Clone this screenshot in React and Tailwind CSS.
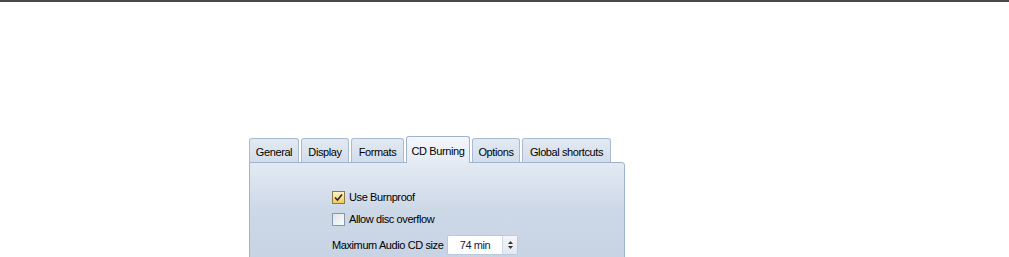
import React from "react";

const tabs = ["General", "Display", "Formats", "CD Burning", "Options", "Global shortcuts"];
const widths = [50, 48, 53, 64, 48, 89];

function Check({ checked }) {
  return (
    <div className={"w-[13px] h-[13px] border flex items-center justify-center " + (checked ? "border-[#8a7a4a] bg-gradient-to-b from-[#fff3c4] to-[#f4c956]" : "border-[#8596ad] bg-gradient-to-br from-[#dfe4ea] to-[#fbfcfd]")}>
      {checked && (
        <svg width="9" height="9" viewBox="0 0 9 9">
          <path d="M1 4.5 L3.5 7 L8 1.5" fill="none" stroke="#2a2a2a" strokeWidth="1.6" />
        </svg>
      )}
    </div>
  );
}

export default function App() {
  return (
    <div className="w-[1009px] h-[257px] bg-white overflow-hidden border-t-2 border-[#4a4a4a] tracking-[-0.4px]" style={{ fontFamily: '"Liberation Sans", Arial, sans-serif' }}>
      <div className="pl-[249px] pt-[133px]">
        <div className="w-[376px]">
          <div className="flex items-end gap-[2px] h-[27px]">
            {tabs.map((t, i) => {
              const sel = i === 3;
              return (
                <div
                  key={t}
                  style={{ width: widths[i] }}
                  className={
                    "flex items-center justify-center whitespace-nowrap text-[11px] text-black border border-b-0 rounded-t-[3px] " +
                    (sel
                      ? "h-[27px] border-[#9fb3cc] bg-gradient-to-b from-[#f4f7fb] to-[#e4ebf4] -mb-px relative z-10 pt-[2px]"
                      : "h-[24px] border-[#a9bbd3] bg-gradient-to-b from-[#e2e9f2] to-[#d3deeb] pt-[3px]")
                  }
                >
                  {t}
                </div>
              );
            })}
          </div>
          <div className="h-[96px] border border-[#9fb3cc] rounded-tr-[3px] bg-gradient-to-b from-[#e3eaf3] via-[#cdd8e7] to-[#c8d4e4] pl-[82px] pt-[27px] text-[11px] text-black">
            <div className="flex items-center gap-[4px] h-[14px]">
              <Check checked />
              <span className="whitespace-nowrap">Use Burnproof</span>
            </div>
            <div className="flex items-center gap-[4px] h-[14px] mt-[8px]">
              <Check />
              <span className="whitespace-nowrap">Allow disc overflow</span>
            </div>
            <div className="flex items-center mt-[9px]">
              <span className="w-[115px] whitespace-nowrap">Maximum Audio CD size</span>
              <div className="flex h-[20px] w-[71px] border border-[#bcc9da] bg-white rounded-[2px]">
                <div className="flex-1 flex items-center justify-center text-[11px] text-[#1a1a3a]">74 min</div>
                <div className="w-[15px] flex flex-col items-center justify-center gap-[2px] bg-gradient-to-b from-[#f3f6fa] to-[#e3e9f1] border-l border-[#d0d9e5]">
                  <svg width="5" height="3" viewBox="0 0 5 3"><path d="M0 3 L2.5 0 L5 3 Z" fill="#333" /></svg>
                  <svg width="5" height="3" viewBox="0 0 5 3"><path d="M0 0 L2.5 3 L5 0 Z" fill="#333" /></svg>
                </div>
              </div>
            </div>
          </div>
        </div>
      </div>
    </div>
  );
}
